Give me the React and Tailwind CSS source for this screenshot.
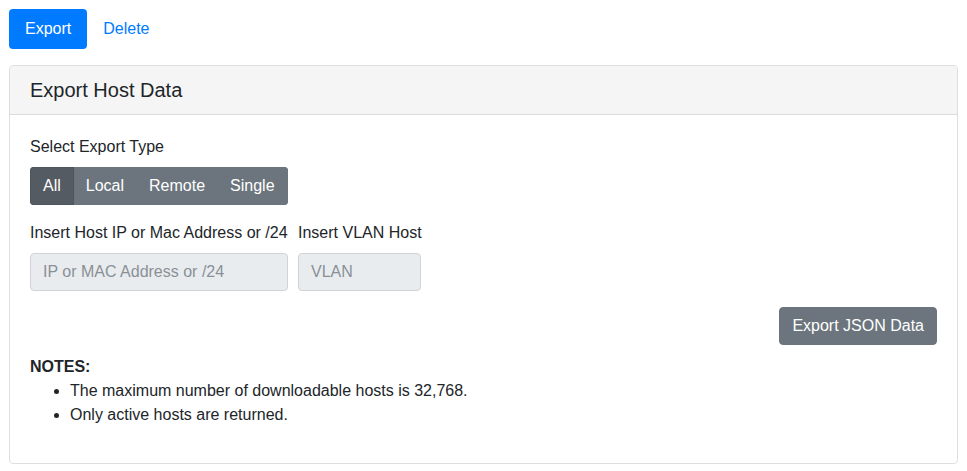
import React, { useState } from 'react';

const types = ['All', 'Local', 'Remote', 'Single'];

export default function App() {
    const [tab, setTab] = useState('Export');
    const [kind, setKind] = useState('All');

    return (
        <div className="p-[9px] text-[16px] leading-6 text-[#212529] bg-white" style={{ fontFamily: '"Liberation Sans", Arial, sans-serif' }}>
            {/* Top nav pills */}
            <div className="flex">
                {['Export', 'Delete'].map((t) => (
                    <button
                        key={t}
                        onClick={() => setTab(t)}
                        className={`px-4 py-2 rounded-[4px] ${tab === t ? 'bg-[#007bff] text-white' : 'text-[#007bff]'}`}
                    >
                        {t}
                    </button>
                ))}
            </div>

            {/* Card */}
            <div className="mt-4 border border-[#dfdfdf] rounded-[4px] overflow-hidden">
                <div className="px-5 py-3 bg-[#f5f5f5] border-b border-[#dcdcdc]">
                    <h3 className="text-[20px] leading-6">Export Host Data</h3>
                </div>

                <div className="p-5">
                    <label className="block mb-2">Select Export Type</label>
                    <div className="inline-flex rounded-[4px] overflow-hidden">
                        {types.map((t, i) => (
                            <button
                                key={t}
                                onClick={() => setKind(t)}
                                className={`px-3 py-1.5 border text-white ${i > 0 ? '-ml-px' : ''} ${kind === t ? 'bg-[#545b62] border-[#4e555b] relative' : 'bg-[#6c757d] border-[#6c757d]'}`}
                            >
                                {t}
                            </button>
                        ))}
                    </div>

                    {/* Inputs */}
                    <div className="flex gap-[10px] mt-4">
                        <div className="w-[258px]">
                            <label className="block mb-2 whitespace-nowrap">Insert Host IP or Mac Address or /24</label>
                            <input
                                disabled
                                placeholder="IP or MAC Address or /24"
                                className="w-full h-[38px] px-3 bg-[#e9ecef] border border-[#ced4da] rounded-[4px] placeholder:text-[#8a9096]"
                            />
                        </div>
                        <div className="w-[123px]">
                            <label className="block mb-2 whitespace-nowrap">Insert VLAN Host</label>
                            <input
                                disabled
                                placeholder="VLAN"
                                className="w-full h-[38px] px-3 bg-[#e9ecef] border border-[#ced4da] rounded-[4px] placeholder:text-[#8a9096]"
                            />
                        </div>
                    </div>

                    <div className="flex justify-end mt-4">
                        <button className="px-3 py-1.5 border border-[#6c757d] bg-[#6c757d] text-white rounded-[4px]">Export JSON Data</button>
                    </div>

                    {/* Notes */}
                    <div className="mt-[10px]">
                        <strong className="font-bold">NOTES:</strong>
                        <ul className="list-disc pl-10 mb-4">
                            <li>The maximum number of downloadable hosts is 32,768.</li>
                            <li>Only active hosts are returned.</li>
                        </ul>
                    </div>
                </div>
            </div>
        </div>
    );
}
